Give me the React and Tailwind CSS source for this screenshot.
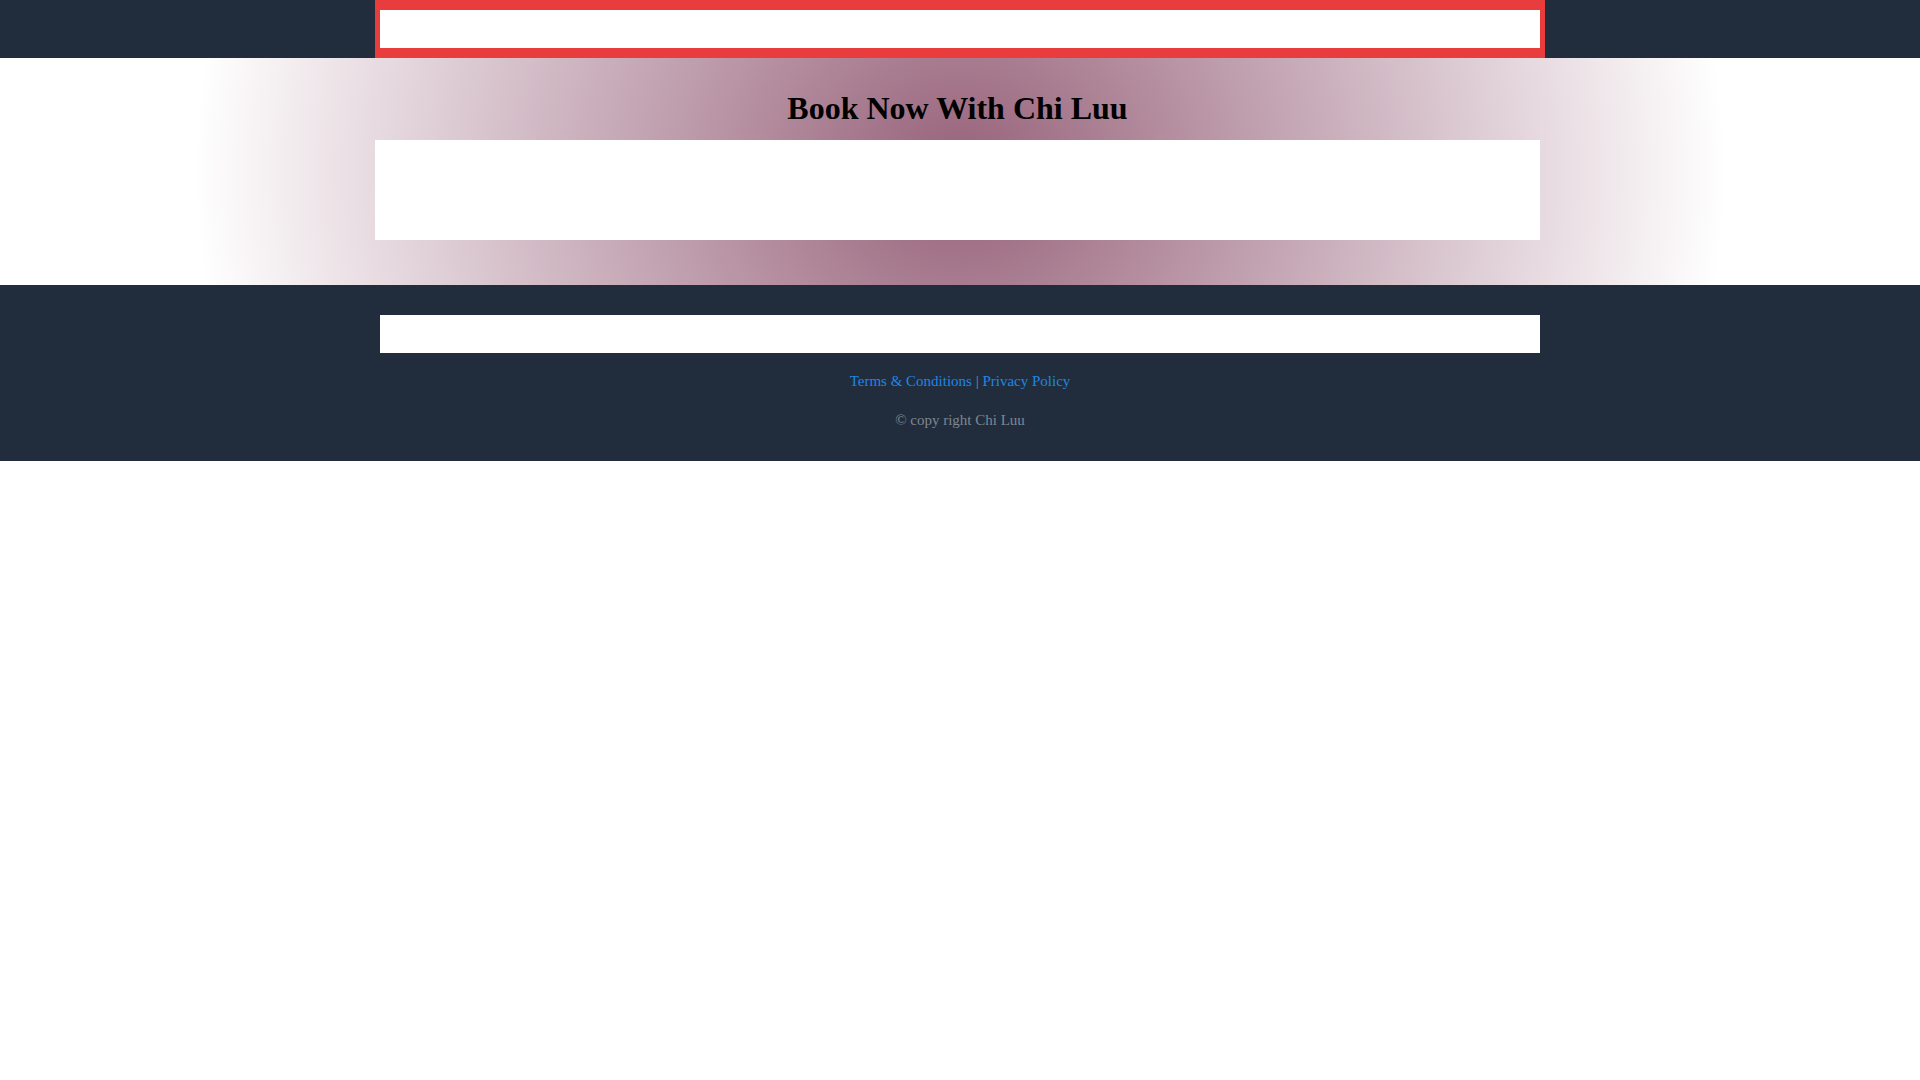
import React from 'react';

const serif = { fontFamily: '"Liberation Serif", "Times New Roman", serif' };

const Header = () => (
  <header className="w-full bg-[#212d3d]">
    <div className="mx-auto w-[1170px] bg-[#e93d3d] px-[5px] py-[10px]">
      <div className="h-[38px] bg-white" />
    </div>
  </header>
);

const Hero = () => (
  <section className="w-full h-[227px] pt-[32px] bg-[radial-gradient(ellipse_765px_700px_at_50%_50%,#97627a_0%,#ffffff_100%)]">
    <div className="mx-auto w-[1170px]">
      <div className="w-[1165px]">
        <h1 className="text-center text-[32px] leading-[36px] font-bold text-black mb-[14px]">
          Book Now With Chi Luu
        </h1>
        <div className="h-[100px] bg-white" />
      </div>
    </div>
  </section>
);

const Footer = () => (
  <footer className="w-full bg-[#212d3d] pt-[30px] pb-[31px]">
    <div className="mx-auto w-[1170px] px-[5px]">
      <div className="h-[38px] bg-white" />
    </div>
    <p className="mt-[18px] text-center text-[15px] leading-[20px] text-[#868d96]">
      <a href="#" className="text-[#1e87e5]">Terms &amp; Conditions</a>
      {' | '}
      <a href="#" className="text-[#1e87e5]">Privacy Policy</a>
    </p>
    <p className="mt-[19px] text-center text-[15px] leading-[20px] text-[#7f8791]">
      © copy right Chi Luu
    </p>
  </footer>
);

export default function App() {
  return (
    <div className="min-h-screen bg-white" style={serif}>
      <Header />
      <Hero />
      <Footer />
    </div>
  );
}
